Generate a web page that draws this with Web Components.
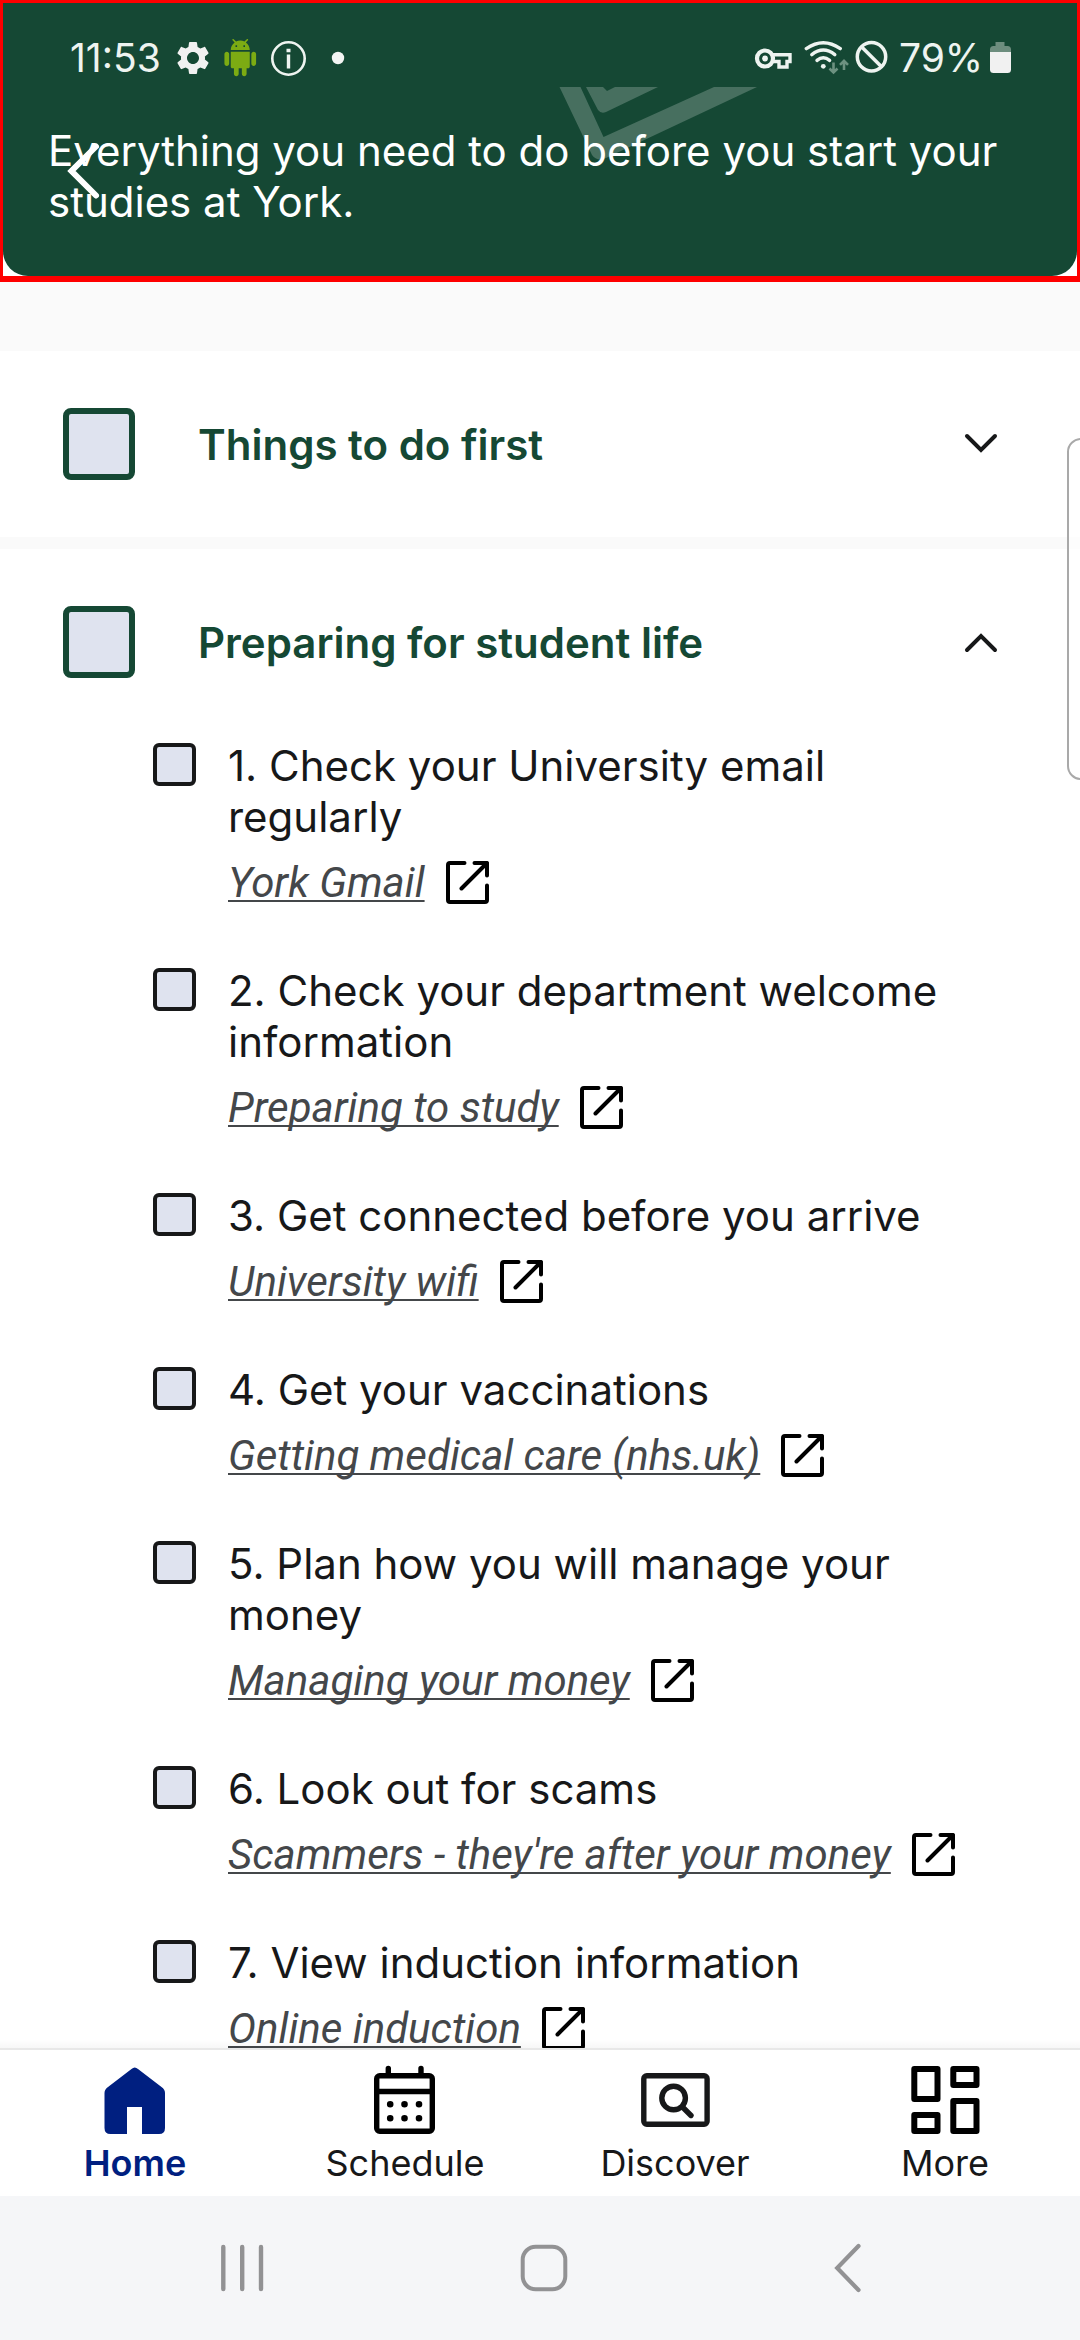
<!DOCTYPE html>
<html lang="en">
<head>
<meta charset="utf-8">
<title>Checklist</title>
<style>
html, body { margin: 0; }
body { width: 1080px; height: 2340px; overflow: hidden; font-family: Inter, Roboto, sans-serif; color: #171819; }
</style>
</head>
<body>
<checklist-screen></checklist-screen>

<template id="t-screen">
  <style>
    :host { display: flex; flex-direction: column; width: 1080px; height: 2340px; position: relative; background: #fafafa; overflow: hidden; }
    main { flex: 1; min-height: 0; overflow: hidden; display: flex; flex-direction: column; gap: 12px; padding-top: 69px; position: relative; }
    main::after { content: ""; position: absolute; left: 0; right: 0; bottom: 0; height: 9px; background: linear-gradient(rgba(0,0,0,0), rgba(0,0,0,.03)); }
    .edge { position: absolute; left: 1067px; top: 438px; width: 40px; height: 342px; box-sizing: border-box; border: 2px solid #a9a9a9; border-radius: 14px; background: rgba(255,255,255,.5); }
  </style>
  <page-header><span>Everything you need to do before you start your studies at York.</span></page-header>
  <main>
    <check-section heading="Things to do first"></check-section>
    <check-section heading="Preparing for student life" open>
      <check-item link="York Gmail">1. Check your University email regularly</check-item>
      <check-item link="Preparing to study">2. Check your department welcome information</check-item>
      <check-item link="University wifi">3. Get connected before you arrive</check-item>
      <check-item link="Getting medical care (nhs.uk)">4. Get your vaccinations</check-item>
      <check-item link="Managing your money">5. Plan how you will manage your money</check-item>
      <check-item link="Scammers - they're after your money">6. Look out for scams</check-item>
      <check-item link="Online induction">7. View induction information</check-item>
    </check-section>
  </main>
  <tab-bar></tab-bar>
  <system-bar></system-bar>
  <div class="edge"></div>
</template>

<template id="t-header">
  <style>
    :host { display: block; height: 282px; box-sizing: border-box; border: 3px solid #fe0000; border-bottom-width: 6px; background: #fff; flex: none; position: relative; }
    .panel { height: 273px; background: #154834; border-radius: 0 0 25px 25px; position: relative; overflow: hidden; display: flex; flex-direction: column; }
    .mark { position: absolute; left: 547px; top: 84px; }
    .back { position: absolute; left: 57px; top: 133px; }
    p { margin: 44px 60px 0 45px; font-size: 42px; line-height: 51px; color: #fff; position: relative; }
  </style>
  <div class="panel">
    <svg class="mark" width="220" height="80" viewBox="550 87 220 80" fill="#476f5f">
      <path d="M559.5 87H580.5L603.5 137L714 87H757L606 158Q597 162 592 155Z"/>
      <path d="M586 87H603L607 91L615 87H658L606 112Q601 114 598 110Z"/>
    </svg>
    <status-bar></status-bar>
    <p><slot></slot></p>
    <svg class="back" width="50" height="70" viewBox="60 136 50 70" fill="none" stroke="#fff" stroke-width="6" stroke-linecap="round" stroke-linejoin="miter"><path d="M96 146.500L71.500 171L96 195.500"/></svg>
  </div>
</template>

<template id="t-status">
  <style>
    :host { display: flex; align-items: center; justify-content: space-between; height: 46px; padding: 32px 65px 0 67px; color: #eef4f0; font-size: 39px; line-height: 46px; }
    div { display: flex; align-items: center; }
    svg { display: block; flex: none; }
    .time { width: 103px; }
    .pct { width: 86px; }
  </style>
  <div>
    <span class="time">11:53</span>
    <svg width="40" height="40" viewBox="0 0 24 24" fill="#f1f1f1"><path d="M19.14 12.94c.04-.3.06-.61.06-.94 0-.32-.02-.64-.07-.94l2.030-1.580c.18-.14.23-.41.12-.61l-1.920-3.320c-.12-.22-.37-.29-.59-.22l-2.390.96c-.5-.38-1.030-.7-1.620-.94l-.36-2.540c-.04-.24-.24-.41-.48-.41h-3.840c-.24 0-.43.17-.47.41l-.36 2.540c-.59.24-1.130.57-1.620.94l-2.390-.96c-.22-.08-.47 0-.59.22L2.740 8.870c-.12.21-.08.47.12.61l2.030 1.580c-.05.3-.09.63-.09.94s.02.64.07.94l-2.030 1.580c-.18.14-.23.41-.12.61l1.920 3.320c.12.22.37.29.59.22l2.390-.96c.5.38 1.030.7 1.620.94l.36 2.540c.05.24.24.41.48.41h3.840c.24 0 .44-.17.47-.41l.36-2.540c.59-.24 1.130-.56 1.620-.94l2.390.96c.22.08.47 0 .59-.22l1.920-3.320c.12-.22.07-.47-.12-.61l-2.010-1.580zM12 15.600c-1.980 0-3.600-1.620-3.600-3.600s1.620-3.600 3.600-3.600 3.600 1.620 3.600 3.600-1.620 3.600-3.600 3.600z"/></svg>
    <svg width="55" height="38" viewBox="-5.200 0 34.700 24" fill="#7cab13"><path d="M6 17.500c0 .55.45 1 1 1h1v3.500c0 .83.67 1.500 1.500 1.500s1.500-.67 1.500-1.500v-3.500h2v3.500c0 .83.67 1.500 1.500 1.500s1.500-.67 1.500-1.500v-3.500h1c.55 0 1-.45 1-1V8H6v9.500zM3.500 8C2.670 8 2 8.670 2 9.500v6c0 .83.67 1.500 1.500 1.500S5 16.330 5 15.500v-6C5 8.670 4.330 8 3.500 8zm17 0c-.83 0-1.500.67-1.500 1.500v6c0 .83.67 1.500 1.500 1.500s1.500-.67 1.500-1.500v-6c0-.83-.67-1.500-1.500-1.500zm-4.970-5.840l1.300-1.300c.2-.2.2-.51 0-.71-.2-.2-.51-.2-.71 0l-1.480 1.480C13.850 1.230 12.950 1 12 1c-.96 0-1.860.23-2.660.63L7.850.15c-.2-.2-.51-.2-.71 0-.2.2-.2.51 0 .71l1.310 1.310C6.970 3.260 6 5.010 6 7h12c0-1.990-.97-3.750-2.470-4.840zM10 5H9V4h1v1zm5 0h-1V4h1v1z"/></svg>
    <svg width="38" height="38" viewBox="0 0 38 38"><circle cx="20.500" cy="19.500" r="16.200" fill="none" stroke="#eef4f0" stroke-width="2.600"/><path d="M18.800 15.500h3.400v14h-3.400zM18.500 9.700h4v3.600h-4z" fill="#eef4f0"/></svg>
    <svg width="40" height="38" viewBox="0 0 40 38"><circle cx="32" cy="19" r="6.200" fill="#f3f5f3"/></svg>
  </div>
  <div>
    <svg width="148" height="40" viewBox="752 38 148 40" fill="none" stroke="#eef4f0">
      <circle cx="766" cy="58.500" r="8" stroke-width="4.200"/><circle cx="766" cy="58.500" r="2.900" fill="#eef4f0" stroke="none"/>
      <path d="M774 54.800H791V61.500H788V67H780V61.500H774" stroke-width="3.400"/>
      <g stroke-width="3.400" stroke-linecap="round"><path d="M807.300 48.600Q824.300 36.800 841.300 48.600"/><path d="M812.800 54.600Q824.300 45.400 835.800 54.600"/><path d="M818 60.400Q824.300 55 830.600 60.400"/></g>
      <circle cx="824.300" cy="66.300" r="2.400" fill="#eef4f0" stroke="none"/>
      <path d="M834.500 62.500V72M830.500 68.500L834.500 72.500L838.500 68.500M845 70V61M841 64.800L845 60.800L849 64.800" stroke="#6d9180" stroke-width="2.600"/>
      <circle cx="872.500" cy="56.700" r="14.200" stroke-width="3.500"/><path d="M862.500 46.700L882.500 66.700" stroke-width="3.500"/>
    </svg>
    <span class="pct">79%</span>
    <svg width="27" height="40" viewBox="985 38 27 40"><path d="M995.500 42h9v4h3q3.500 0 3.500 3.500V53H990v-3.500q0-3.500 3.500-3.500h2z" fill="#6d8d7e"/><path d="M990 52h21v17.500q0 3.500-3.500 3.500h-14q-3.500 0-3.500-3.500z" fill="#f1f1f1"/></svg>
  </div>
</template>

<template id="t-section">
  <style>
    :host { display: block; background: #fff; flex: none; }
    header { display: flex; align-items: center; height: 186px; padding: 0 79px 0 63px; }
    .box { width: 72px; height: 72px; box-sizing: border-box; border: 6px solid #154834; border-radius: 8px; background: #dfe3ef; }
    h2 { flex: 1; margin: 0 0 0 63px; font-size: 42px; line-height: 51px; font-weight: 600; color: #154834; }
    svg { display: block; }
    .list { display: flex; flex-direction: column; gap: 58.250px; padding: 5px 90px 0 153px; }
    :host(:not([open])) .list { display: none; }
    :host([open]) svg { transform: rotate(180deg); }
  </style>
  <header>
    <span class="box"></span><h2></h2>
    <svg width="40" height="40" viewBox="0 0 40 40" fill="none" stroke="#171819" stroke-width="4" stroke-linecap="round"><path d="M6 12L20 26L34 12"/></svg>
  </header>
  <div class="list"><slot></slot></div>
</template>

<template id="t-item">
  <style>
    :host { display: flex; gap: 32px; align-items: flex-start; }
    .box { flex: none; width: 43px; height: 43px; margin-top: 3.300px; box-sizing: border-box; border: 4px solid #171819; border-radius: 6px; background: #dfe3ef; }
    .title { padding-top: 1px; font-size: 42px; line-height: 50.850px; }
    .row { display: flex; gap: 21px; align-items: center; margin-top: 15px; height: 49px; }
    a { font: italic 400 42px/49px Roboto, sans-serif; color: #44474a; text-decoration: underline; text-decoration-thickness: 2px; text-underline-offset: 3px; text-decoration-skip-ink: none; white-space: nowrap; }
    svg { display: block; flex: none; }
  </style>
  <span class="box"></span>
  <div>
    <div class="title"><slot></slot></div>
    <div class="row"><a></a>
      <svg width="43" height="43" viewBox="0 0 43 43" fill="none" stroke="#000" stroke-width="4" stroke-linecap="round" stroke-linejoin="round"><path d="M18.500 2H4Q2 2 2 4V39Q2 41 4 41H39Q41 41 41 39V24.500M28.500 2H41V14.500M41 2L15.500 27.500"/></svg>
    </div>
  </div>
</template>

<template id="t-tabs">
  <style>
    :host { display: flex; height: 148px; box-sizing: border-box; border-top: 2px solid #e8e8e8; background: #fff; flex: none; }
    .tab { flex: 1; display: flex; flex-direction: column; align-items: center; padding-top: 12px; font-size: 36px; line-height: 44px; }
    .on { font-weight: 600; color: #001f80; }
    svg { display: block; margin-bottom: 1px; }
  </style>
  <div class="tab on">
    <svg width="74" height="78" viewBox="98 2062 74 78" fill="#001f80"><path d="M131.500 2069Q134.700 2066 138 2069L161.500 2087Q165 2089.500 165 2093V2128Q165 2134 159 2134H142V2107H127V2134H110.500Q104.500 2134 104.500 2128V2093Q104.500 2089.500 108 2087Z"/></svg>Home</div>
  <div class="tab">
    <svg width="74" height="78" viewBox="367 2062 74 78" fill="none" stroke="#000" stroke-width="5.400"><rect x="375.700" y="2075.700" width="55.600" height="55.600" rx="3"/><path d="M376 2091.500H431"/><path d="M387.300 2068.500V2075M420 2068.500V2075" stroke-linecap="round"/><path d="M389.200 2104.200h.01M403.500 2104.200h.01M418 2104.200h.01M389.200 2118.300h.01M403.500 2118.300h.01M418 2118.300h.01" stroke-width="6.600" stroke-linecap="round"/></svg>Schedule</div>
  <div class="tab">
    <svg width="74" height="78" viewBox="639 2062 74 78" fill="none" stroke="#171819" stroke-width="5.400"><rect x="644.800" y="2075.700" width="63.300" height="48.600" rx="3"/><circle cx="674.600" cy="2098" r="11.800"/><path d="M683.500 2107L692 2115.500" stroke-linecap="round"/></svg>Discover</div>
  <div class="tab">
    <svg width="74" height="78" viewBox="909 2062 74 78" fill="none" stroke="#000" stroke-width="6" stroke-linejoin="round"><path d="M915.300 2069H938.500V2099H915.300zM954.300 2069H977.500V2085H954.300zM915.300 2115H938.500V2131H915.300zM954.300 2101H977.500V2131H954.300z"/></svg>More</div>
</template>

<template id="t-system">
  <style>
    :host { display: flex; justify-content: space-between; align-items: center; height: 144px; box-sizing: border-box; padding: 0 212px 0 217px; background: #f5f6f8; flex: none; }
    svg { display: block; }
    .home { margin-right: 7px; }
  </style>
  <svg width="50" height="60" viewBox="217 2238 50 60" stroke="#929294" stroke-width="4.400" stroke-linecap="round"><path d="M223.300 2247V2289M242.200 2247V2289M261 2247V2289"/></svg>
  <svg class="home" width="54" height="60" viewBox="517 2238 54 60" fill="none" stroke="#929294" stroke-width="4"><rect x="522.700" y="2246.700" width="42.600" height="42.600" rx="13"/></svg>
  <svg width="40" height="60" viewBox="828 2238 40 60" fill="none" stroke="#929294" stroke-width="4.200" stroke-linecap="round"><path d="M858.500 2246L837.200 2268L858.500 2290"/></svg>
</template>

<script>
const define = (tag, id, setup) => customElements.define(tag, class extends HTMLElement {
  constructor() {
    super();
    this.attachShadow({ mode: 'open' }).append(document.getElementById(id).content.cloneNode(true));
  }
  connectedCallback() { if (setup) setup(this, this.shadowRoot); }
});
define('status-bar', 't-status');
define('page-header', 't-header');
define('check-item', 't-item', (el, root) => { root.querySelector('a').textContent = el.getAttribute('link'); });
define('check-section', 't-section', (el, root) => { root.querySelector('h2').textContent = el.getAttribute('heading'); });
define('tab-bar', 't-tabs');
define('system-bar', 't-system');
define('checklist-screen', 't-screen');
</script>
</body>
</html>
